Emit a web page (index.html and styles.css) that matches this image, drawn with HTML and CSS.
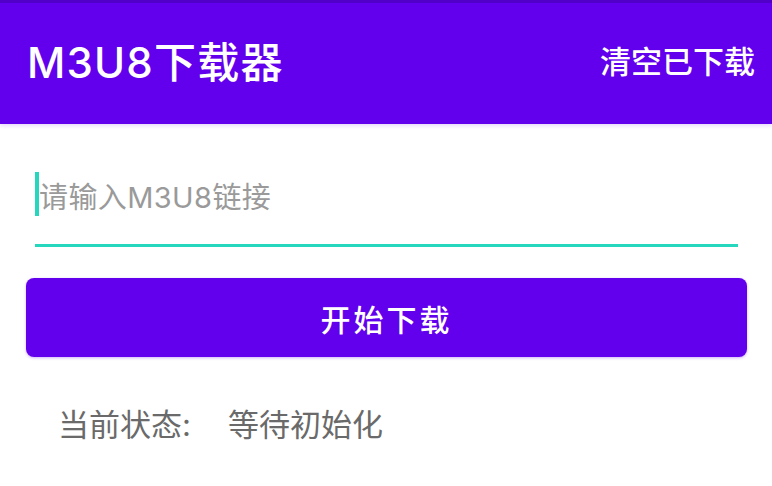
FILE: index.html
```html
<!DOCTYPE html>
<html lang="zh-CN">
<head>
<meta charset="utf-8">
<title>M3U8下载器</title>
<link rel="stylesheet" href="styles.css">
</head>
<body>
<header class="appbar">
  <h1 class="title">M3U8下载器</h1>
  <span class="action">清空已下载</span>
</header>
<main class="content">
  <div class="field">
    <span class="cursor"></span>
    <span class="placeholder">请输入M3U8链接</span>
  </div>
  <button class="btn">开始下载</button>
  <div class="status">
    <span class="label">当前状态:</span>
    <span class="value">等待初始化</span>
  </div>
</main>
</body>
</html>
```

FILE: styles.css
```css
html, body {
  margin: 0;
  padding: 0;
  background: #ffffff;
  font-family: Inter, "Noto Sans CJK SC", "Noto Sans", sans-serif;
  overflow: hidden;
}

.appbar {
  height: 124px;
  box-sizing: border-box;
  background: #6200ee;
  border-top: 3px solid #5000c8;
  display: flex;
  align-items: center;
  justify-content: space-between;
  padding: 0 17px 8px 27px;
  color: #ffffff;
  box-shadow: 0 2px 4px rgba(98, 0, 238, 0.15);
}

.title {
  margin: 0;
  font-size: 42px;
  font-weight: 500;
  letter-spacing: 1.2px;
}

.action {
  font-size: 31px;
  font-weight: 500;
}

.content {
  display: flex;
  flex-direction: column;
}

.field {
  margin: 48px 34px 0 35px;
  height: 44px;
  padding-bottom: 28px;
  border-bottom: 3px solid #26d6bd;
  display: flex;
  align-items: center;
}

.cursor {
  width: 4px;
  height: 44px;
  background: #26d6bd;
}

.placeholder {
  font-size: 29px;
  letter-spacing: 0.4px;
  color: #9a9a9a;
  margin-top: 2px;
}

.btn {
  margin: 31px 25px 0 26px;
  height: 79px;
  border: none;
  border-radius: 8px;
  background: #6200ee;
  color: #ffffff;
  font-family: inherit;
  font-size: 30px;
  font-weight: 500;
  letter-spacing: 3px;
  box-shadow: 0 1px 3px rgba(98, 0, 238, 0.3);
}

.status {
  margin: 48px 0 0 58px;
  display: flex;
  gap: 37px;
  font-size: 31px;
  line-height: 40px;
  color: #6a6a6a;
}
```
